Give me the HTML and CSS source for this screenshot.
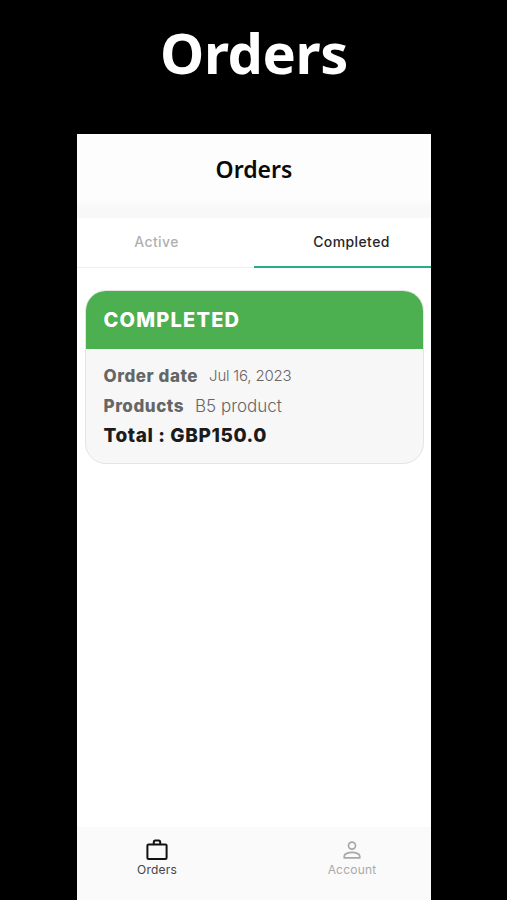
FILE: index.html
```html
<!DOCTYPE html>
<html lang="en">
<head>
<meta charset="utf-8">
<title>Orders</title>
<link rel="stylesheet" href="styles.css">
</head>
<body>
<h1 class="headline"><span>Orders</span></h1>
<main class="phone">
  <header class="topbar"><h2><span>Orders</span></h2></header>
  <nav class="tabs">
    <div class="tab">Active</div>
    <div class="tab tab-selected">Completed</div>
  </nav>
  <section class="content">
    <article class="card">
      <div class="card-status"><span>COMPLETED</span></div>
      <div class="card-body">
        <div class="row"><b class="k-date">Order date</b><span class="v-date">Jul 16, 2023</span></div>
        <div class="row"><b class="k-products">Products</b><span class="v-products">B5 product</span></div>
        <div class="row total"><span>Total : GBP150.0</span></div>
      </div>
    </article>
  </section>
  <footer class="bottombar">
    <div class="item item-selected">
      <svg width="24" height="24" viewBox="0 0 24 24" fill="none" stroke="currentColor" stroke-width="2" stroke-linejoin="round"><rect x="2.4" y="6.4" width="19.2" height="14.6" rx="1.2"/><path d="M8.8 6.4V4.2Q8.8 2.6 10.4 2.6H13.6Q15.2 2.6 15.2 4.2V6.4"/></svg>
      <span>Orders</span>
    </div>
    <div class="item">
      <svg width="24" height="24" viewBox="0 0 24 24" fill="none" stroke="currentColor" stroke-width="1.7" stroke-linejoin="round"><circle cx="12" cy="7.6" r="3.5"/><path d="M4.2 19.8V18.2C4.2 15.7 8.6 14.4 12 14.4S19.8 15.7 19.8 18.2V19.8Z"/></svg>
      <span class="account">Account</span>
    </div>
  </footer>
</main>
</body>
</html>
```
FILE: styles.css
```css
* { box-sizing: border-box; }
body {
  margin: 0;
  height: 900px;
  overflow: hidden;
  display: flex;
  flex-direction: column;
  align-items: center;
  background: #000;
  font-family: Inter, "Liberation Sans", sans-serif;
}
h1, h2 { margin: 0; font-family: "Noto Sans", "Open Sans", sans-serif; }
.headline {
  height: 134px;
  padding: 12px 0 0 1px;
  color: #fff;
  font-size: 56px;
  line-height: 80px;
  font-weight: 700;
  letter-spacing: -0.4px;
}
.phone {
  width: 354px;
  height: 766px;
  display: flex;
  flex-direction: column;
  background: #fff;
}
.topbar {
  height: 84px;
  padding: 19px 0 0 1px;
  text-align: center;
  background: linear-gradient(#fdfdfd 78%, #f8f8f8 88%);
}
.topbar h2 { font-size: 23px; line-height: 32px; font-weight: 600; color: #0a0a0a; }
.tabs { display: flex; height: 50px; }
.tab {
  flex: 0 0 177px;
  padding-right: 17px;
  line-height: 48px;
  text-align: center;
  font-size: 14px;
  font-weight: 500;
  letter-spacing: 0.4px;
  color: #b0b0b0;
  border-bottom: 1px solid #eee;
}
.tab-selected { padding: 0 0 0 19px; color: #262626; border-bottom: 2px solid #25ae87; }
.content { flex: 1; padding: 22px 7px 0 8px; }
.card {
  height: 174px;
  padding: 1px;
  border: 1px solid #e4e4e4;
  border-radius: 21px;
  background: #f7f7f7;
  overflow: hidden;
}
.card-status {
  height: 58px;
  margin: -1px -1px 0;
  padding-left: 18px;
  background: #4caf50;
  color: #fff;
  font-size: 20px;
  line-height: 59px;
  font-weight: 800;
  letter-spacing: 1.2px;
}
.card-body { padding: 12px 16px 0 17px; color: #666; }
.row { display: flex; height: 30px; line-height: 31px; font-size: 17px; }
.row b { font-weight: 800; letter-spacing: 0.55px; }
.row b + span { margin-left: 11px; font-weight: 300; }
.row .v-date { line-height: 29px; font-size: 15px; letter-spacing: -0.2px; }
.total { line-height: 29px; color: #1b1b1b; font-size: 19px; font-weight: 800; letter-spacing: 0.6px; }
.bottombar { display: flex; height: 73px; padding: 11px 0 0 1px; background: #fafafa; }
.item {
  flex: 0 0 177px;
  display: flex;
  flex-direction: column;
  align-items: center;
  padding-right: 18px;
  color: #a8a8a8;
  font-size: 12px;
  line-height: 16px;
}
.item + .item { padding: 0 0 0 18px; }
.item span { color: #aaa; letter-spacing: 0.2px; }
.item-selected { color: #111; }
.item-selected span { color: #444; }
```
